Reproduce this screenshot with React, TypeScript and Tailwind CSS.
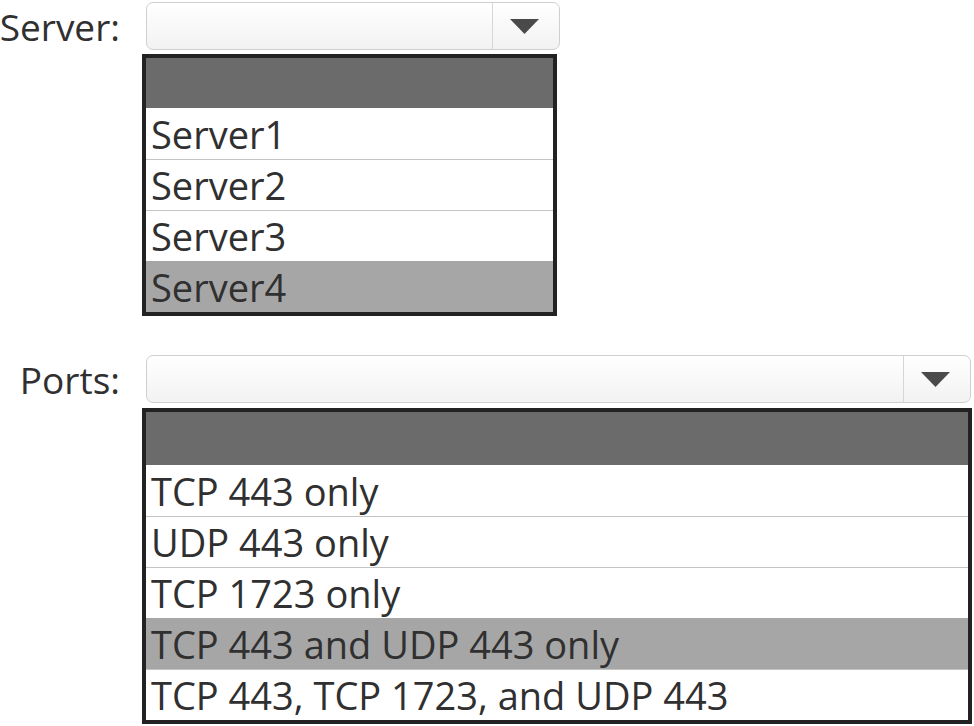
import React from "react";

function Arrow() {
  return (
    <svg width="29" height="15" viewBox="0 0 29 15">
      <path d="M0 0 L29 0 L14.5 15 Z" fill="#4a4a4a" />
    </svg>
  );
}

function SelectBox({ widthClass }: { widthClass: string }) {
  return (
    <div
      className={`ml-[4px] h-[48px] ${widthClass} flex rounded-[7px] border-[1.5px] border-[#cfcfcf] bg-gradient-to-b from-white to-[#f2f2f2]`}
    >
      <div className="flex-1" />
      <div className="w-[67px] h-full border-l border-[#d6d6d6] flex items-center justify-center pr-[4px]">
        <Arrow />
      </div>
    </div>
  );
}

function List({
  items,
  highlight,
  widthClass,
  headerClass,
  rowClass,
}: {
  items: string[];
  highlight: number;
  widthClass: string;
  headerClass: string;
  rowClass: string;
}) {
  return (
    <div className={`${widthClass} border-4 border-[#222] bg-white`}>
      <div className={`${headerClass} bg-[#6b6b6b]`} />
      {items.map((t, i) => (
        <div
          key={t}
          className={`${rowClass} flex items-center pl-[5px] text-[38px] leading-none text-[#303030] whitespace-nowrap ${
            i === highlight ? "bg-[#a6a6a6]" : "bg-white"
          } ${i > 0 && i !== highlight ? "border-t border-[#c4c4c4]" : ""}`}
        >
          {t}
        </div>
      ))}
    </div>
  );
}

export default function App() {
  return (
    <div className="w-[974px] h-[726px] bg-white font-['Open_Sans',sans-serif] text-[#303030] pt-[2px] overflow-hidden">
      <div className="flex">
        <div className="w-[142px] h-[48px] flex items-center justify-end pr-[22px] text-[37px] leading-none">
          Server:
        </div>
        <div className="flex flex-col">
          <SelectBox widthClass="w-[414px]" />
          <div className="mt-[4px]">
            <List
              items={["Server1", "Server2", "Server3", "Server4"]}
              highlight={3}
              widthClass="w-[415px]"
              headerClass="h-[50px]"
              rowClass="h-[51px]"
            />
          </div>
        </div>
      </div>
      <div className="flex mt-[39px]">
        <div className="w-[142px] h-[48px] flex items-center justify-end pr-[22px] text-[37px] leading-none">
          Ports:
        </div>
        <div className="flex flex-col">
          <SelectBox widthClass="w-[825px]" />
          <div className="mt-[5px]">
            <List
              items={[
                "TCP 443 only",
                "UDP 443 only",
                "TCP 1723 only",
                "TCP 443 and UDP 443 only",
                "TCP 443, TCP 1723, and UDP 443",
              ]}
              highlight={3}
              widthClass="w-[830px]"
              headerClass="h-[53px]"
              rowClass="h-[51px]"
            />
          </div>
        </div>
      </div>
    </div>
  );
}
